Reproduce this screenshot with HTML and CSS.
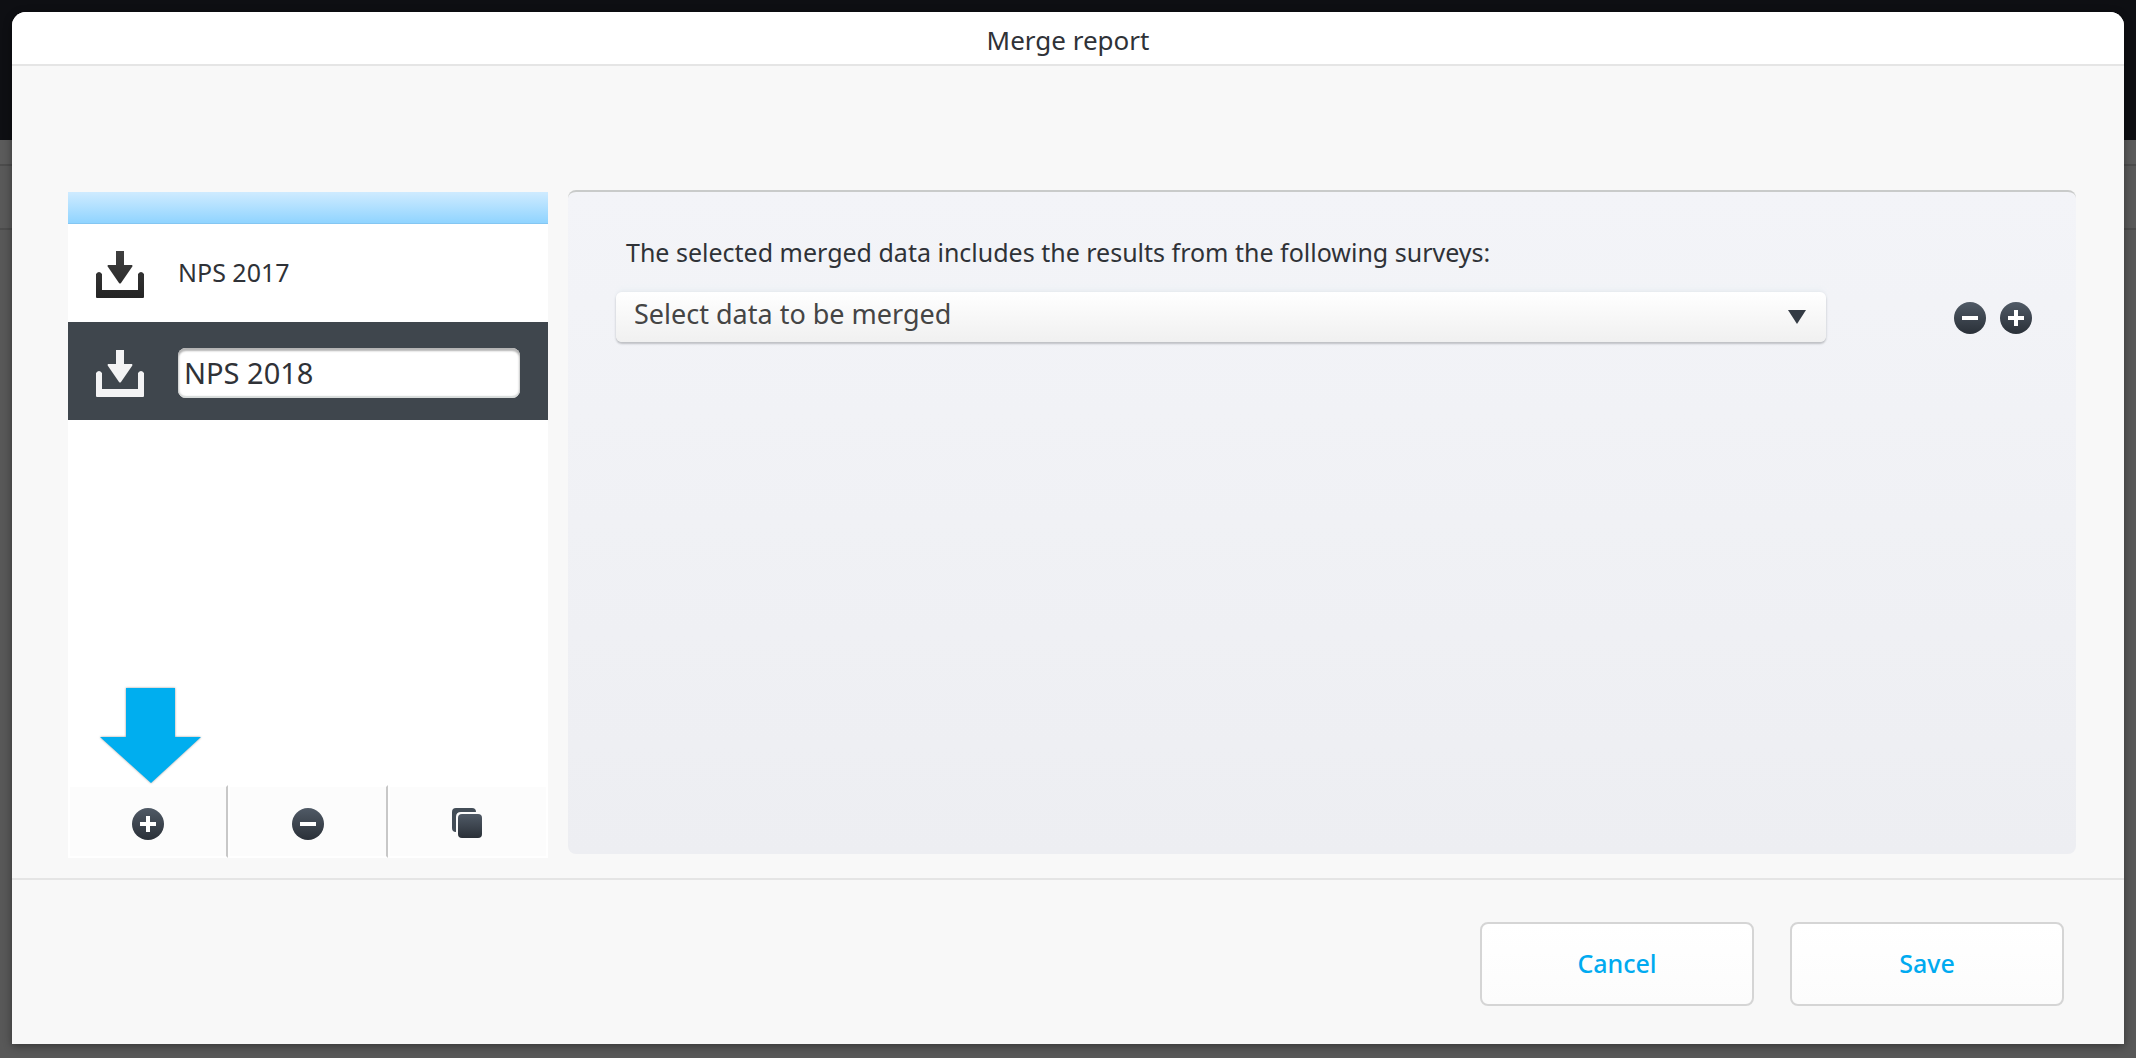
FILE: index.html
```html
<!DOCTYPE html>
<html lang="en">
<head>
<meta charset="utf-8">
<title>Merge report</title>
<link rel="stylesheet" href="styles.css">
</head>
<body>
<svg class="defs" width="0" height="0" aria-hidden="true">
  <defs>
    <linearGradient id="slate" x1="0" y1="0" x2="0" y2="1">
      <stop offset="0" stop-color="#505a66"/>
      <stop offset="1" stop-color="#2a3038"/>
    </linearGradient>
    <linearGradient id="ink" gradientUnits="userSpaceOnUse" x1="0" y1="0" x2="0" y2="54">
      <stop offset="0" stop-color="#404040"/>
      <stop offset="1" stop-color="#202020"/>
    </linearGradient>
    <symbol id="plus" viewBox="0 0 32 32">
      <circle cx="16" cy="16" r="16" fill="url(#slate)"/>
      <path d="M14 8h4v6h6v4h-6v6h-4v-6H8v-4h6z" fill="#fff"/>
    </symbol>
    <symbol id="minus" viewBox="0 0 32 32">
      <circle cx="16" cy="16" r="16" fill="url(#slate)"/>
      <path d="M8 14h16v4H8z" fill="#fff"/>
    </symbol>
    <symbol id="copy" viewBox="0 0 32 32">
      <path d="M4 0h16q4 0 4 4H9q-5 0-5 5v15q-4 0-4-4V4q0-4 4-4z" fill="#434d57"/>
      <rect x="6" y="6" width="24" height="24" rx="4" fill="url(#slate)"/>
    </symbol>
    <symbol id="import" viewBox="0 0 50 48">
      <path d="M21 1h8v14h8q1 1 0 2L26 33q-1 1-2 0L13 17q-1-1 0-2h8z"/>
      <path d="M1 24q3-4 6 0v16h36V24q3-4 6 0v23q0 1-1 1H2q-1 0-1-1z"/>
    </symbol>
  </defs>
</svg>

<form class="dialog">
  <header class="dialog-header">
    <h1 class="dialog-title">Merge report</h1>
  </header>

  <main class="dialog-body">
    <section class="reports" aria-label="Merged reports">
      <div class="reports-band"></div>
      <ul class="report-list">
        <li class="report">
          <svg class="report-icon" aria-hidden="true"><use href="#import"/></svg>
          <span class="report-name">NPS 2017</span>
        </li>
        <li class="report report-active">
          <svg class="report-icon" aria-hidden="true"><use href="#import"/></svg>
          <input class="report-input" type="text" value="NPS 2018" aria-label="Report name">
        </li>
      </ul>
      <div class="toolbar">
        <svg class="pointer" viewBox="0 0 102 98" aria-hidden="true">
          <path d="M26 2h49v49h26L51 97 0 51h26z"/>
        </svg>
        <button class="tool" type="button" aria-label="Add report"><svg class="icon" aria-hidden="true"><use href="#plus"/></svg></button>
        <button class="tool" type="button" aria-label="Remove report"><svg class="icon" aria-hidden="true"><use href="#minus"/></svg></button>
        <button class="tool" type="button" aria-label="Duplicate report"><svg class="icon" aria-hidden="true"><use href="#copy"/></svg></button>
      </div>
    </section>

    <section class="sources">
      <label class="sources-label" for="source">The selected merged data includes the results from the following surveys:</label>
      <div class="source-row">
        <div class="select-box">
          <select class="select" id="source">
            <option>Select data to be merged</option>
          </select>
          <svg class="select-arrow" viewBox="0 0 18 14" aria-hidden="true"><path d="M0 0h18L9 14z"/></svg>
        </div>
        <div class="source-actions">
          <button class="icon-button" type="button" aria-label="Remove survey"><svg class="icon" aria-hidden="true"><use href="#minus"/></svg></button>
          <button class="icon-button" type="button" aria-label="Add survey"><svg class="icon" aria-hidden="true"><use href="#plus"/></svg></button>
        </div>
      </div>
    </section>
  </main>

  <footer class="dialog-footer">
    <button class="action" type="button">Cancel</button>
    <button class="action" type="submit">Save</button>
  </footer>
</form>
</body>
</html>
```

FILE: styles.css
```css
* {
  box-sizing: border-box;
}

body {
  margin: 0;
  min-height: 100vh;
  padding: 12px 12px 14px;
  display: flex;
  flex-direction: column;
  font-family: "Noto Sans", "Open Sans", sans-serif;
  font-size: 25px;
  line-height: 32px;
  color: #2f3237;
  background: linear-gradient(
    #0e0f13 140px,
    #5b5b5b 140px, #5b5b5b 164px,
    #4c4c4c 164px, #4c4c4c 166px,
    #595959 166px, #595959 228px,
    #4c4c4c 228px, #4c4c4c 230px,
    #585858 230px
  );
}

button,
input,
select {
  font: inherit;
  color: inherit;
}

button {
  padding: 0;
  border: 0;
  background: none;
}

.defs {
  position: absolute;
}

.icon {
  display: block;
  width: 32px;
  height: 32px;
}

.dialog {
  flex: 1;
  display: flex;
  flex-direction: column;
  border-radius: 14px 14px 0 0;
  background: #f8f8f8;
  box-shadow: 0 2px 8px rgba(0, 0, 0, 0.4);
}

.dialog-header {
  padding: 12px 0 8px;
  border-bottom: 2px solid #e5e5e5;
  border-radius: 14px 14px 0 0;
  background: #fff;
}

.dialog-title {
  margin: 0;
  font-size: 26px;
  font-weight: 400;
  text-align: center;
}

.dialog-body {
  flex: 1;
  display: grid;
  grid-template-columns: 480px 1fr;
  gap: 20px;
  padding: 124px 48px 20px 56px;
}

.reports {
  display: flex;
  flex-direction: column;
  margin-top: 2px;
  background: #fff;
}

.reports-band {
  height: 32px;
  border-bottom: 1px solid #84c6f2;
  background: linear-gradient(#cfebff, #90d4ff);
}

.report-list {
  flex: 1;
  margin: 0;
  padding: 0;
  list-style: none;
}

.report {
  display: flex;
  align-items: center;
  gap: 33px;
  height: 98px;
  padding: 2px 28px 0 27px;
}

.report-active {
  background: #3f464d;
}

.report-name {
  padding-bottom: 4px;
}

.report-icon {
  width: 50px;
  height: 48px;
  fill: url(#ink);
}

.report-active .report-icon {
  fill: #f3f3f4;
}

.report-input {
  flex: 1;
  min-width: 0;
  height: 50px;
  padding: 0 6px 2px;
  border: 0;
  border-radius: 8px;
  font-size: 29px;
  background: #fff;
  box-shadow: inset 0 3px 2px #b4b4b4, inset 0 -2px 1px #d8dcdb, inset 0 0 3px #aaa;
}

.report-active {
  padding-top: 4px;
}

.toolbar {
  position: relative;
  display: grid;
  grid-template-columns: repeat(3, 1fr);
  height: 73px;
}

.tool {
  display: flex;
  align-items: center;
  justify-content: center;
  padding-top: 4px;
  border: 2px solid #fff;
  border-right-color: #c8c8c8;
  background: #fcfcfc;
}

.tool:last-child {
  border-right-color: #fff;
}

.pointer {
  position: absolute;
  left: 32px;
  bottom: 74px;
  width: 102px;
  height: 98px;
  fill: #00aeef;
  filter: drop-shadow(0 0 1px rgba(0, 0, 0, 0.4));
}

.sources {
  margin-bottom: 4px;
  padding: 44px 44px 46px 48px;
  border-top: 2px solid #c9cbca;
  border-radius: 8px;
  background: linear-gradient(#f3f4f8, #edeef2);
}

.sources-label {
  display: block;
  margin: 0 10px 24px;
}

.source-row {
  display: flex;
  align-items: center;
  gap: 128px;
}

.select-box {
  position: relative;
  flex: 1;
}

.select {
  display: block;
  width: 100%;
  height: 50px;
  padding: 0 56px 6px 18px;
  border: 0;
  border-radius: 6px;
  appearance: none;
  font-size: 27px;
  line-height: 44px;
  color: #454545;
  background: linear-gradient(#fff, #f0f0f0);
  box-shadow: 0 2px 2px #bfc1c5, 0 0 3px #dfe2e7, 0 -6px 4px -2px #edf1f5;
}

.select-arrow {
  position: absolute;
  top: 18px;
  right: 20px;
  width: 18px;
  height: 14px;
  fill: #343b44;
  pointer-events: none;
}

.source-actions {
  display: flex;
  gap: 14px;
  padding-top: 2px;
}

.dialog-footer {
  display: flex;
  justify-content: flex-end;
  gap: 36px;
  padding: 42px 60px 38px;
  border-top: 2px solid #e5e5e5;
}

.action {
  width: 274px;
  height: 84px;
  padding-bottom: 2px;
  border: 2px solid #d5d5d5;
  border-radius: 8px;
  font-weight: 500;
  color: #00aaf0;
  background: linear-gradient(#fff, #fcfcfc);
}
```
